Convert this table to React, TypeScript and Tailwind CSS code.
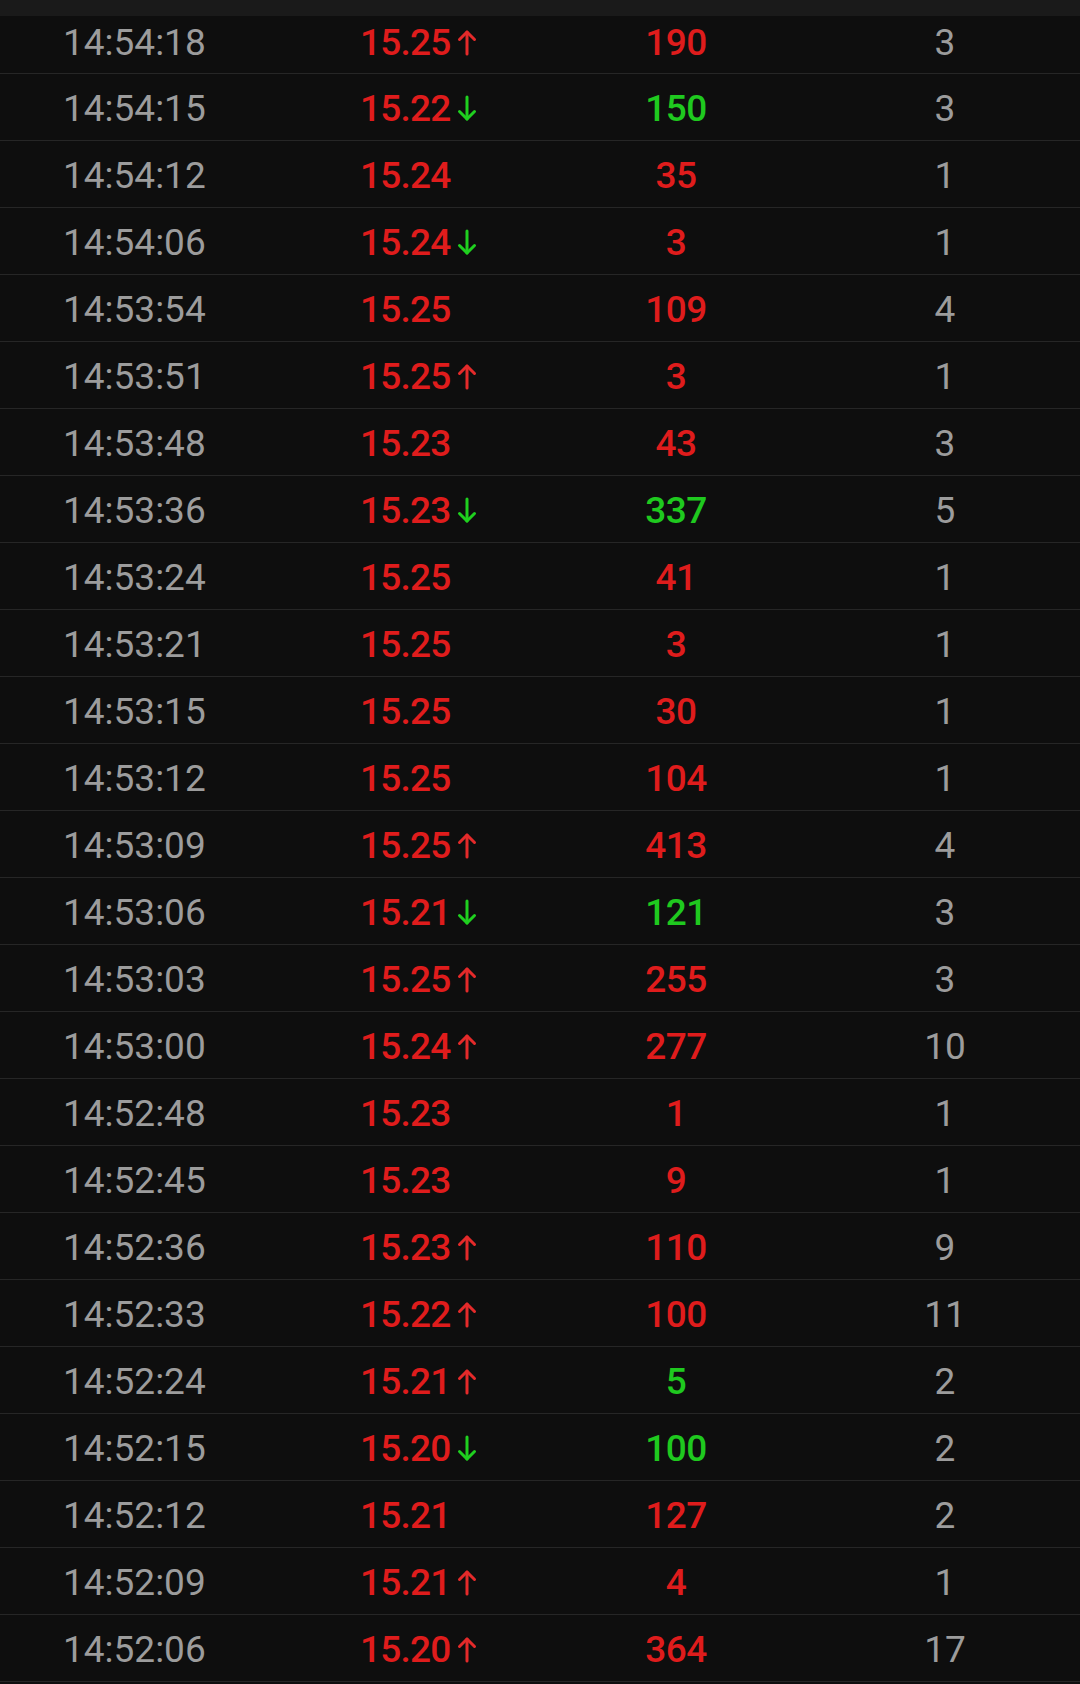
import { Fragment } from "react";

type Trade = {
  time: string;
  price: string;
  dir?: "up" | "down";
  vol: string;
  volUp: boolean;
  count: string;
};

const trades: Trade[] = [
  { time: "14:54:18", price: "15.25", dir: "up", vol: "190", volUp: true, count: "3" },
  { time: "14:54:15", price: "15.22", dir: "down", vol: "150", volUp: false, count: "3" },
  { time: "14:54:12", price: "15.24", vol: "35", volUp: true, count: "1" },
  { time: "14:54:06", price: "15.24", dir: "down", vol: "3", volUp: true, count: "1" },
  { time: "14:53:54", price: "15.25", vol: "109", volUp: true, count: "4" },
  { time: "14:53:51", price: "15.25", dir: "up", vol: "3", volUp: true, count: "1" },
  { time: "14:53:48", price: "15.23", vol: "43", volUp: true, count: "3" },
  { time: "14:53:36", price: "15.23", dir: "down", vol: "337", volUp: false, count: "5" },
  { time: "14:53:24", price: "15.25", vol: "41", volUp: true, count: "1" },
  { time: "14:53:21", price: "15.25", vol: "3", volUp: true, count: "1" },
  { time: "14:53:15", price: "15.25", vol: "30", volUp: true, count: "1" },
  { time: "14:53:12", price: "15.25", vol: "104", volUp: true, count: "1" },
  { time: "14:53:09", price: "15.25", dir: "up", vol: "413", volUp: true, count: "4" },
  { time: "14:53:06", price: "15.21", dir: "down", vol: "121", volUp: false, count: "3" },
  { time: "14:53:03", price: "15.25", dir: "up", vol: "255", volUp: true, count: "3" },
  { time: "14:53:00", price: "15.24", dir: "up", vol: "277", volUp: true, count: "10" },
  { time: "14:52:48", price: "15.23", vol: "1", volUp: true, count: "1" },
  { time: "14:52:45", price: "15.23", vol: "9", volUp: true, count: "1" },
  { time: "14:52:36", price: "15.23", dir: "up", vol: "110", volUp: true, count: "9" },
  { time: "14:52:33", price: "15.22", dir: "up", vol: "100", volUp: true, count: "11" },
  { time: "14:52:24", price: "15.21", dir: "up", vol: "5", volUp: false, count: "2" },
  { time: "14:52:15", price: "15.20", dir: "down", vol: "100", volUp: false, count: "2" },
  { time: "14:52:12", price: "15.21", vol: "127", volUp: true, count: "2" },
  { time: "14:52:09", price: "15.21", dir: "up", vol: "4", volUp: true, count: "1" },
  { time: "14:52:06", price: "15.20", dir: "up", vol: "364", volUp: true, count: "17" },
];

// thin tick arrow after the price
function Arrow({ dir }: { dir: "up" | "down" }) {
  const up = dir === "up";
  return (
    <svg
      width="20"
      height="27"
      viewBox="0 0 20 27"
      fill="none"
      stroke={up ? "#e42a2a" : "#1fd01f"}
      strokeWidth="3"
      strokeLinecap="round"
      strokeLinejoin="round"
      className="ml-[7px]"
      aria-hidden
    >
      {up ? (
        <>
          <path d="M10 3V25" />
          <path d="M2.5 10.5L10 3L17.5 10.5" />
        </>
      ) : (
        <>
          <path d="M10 2V24" />
          <path d="M2.5 16.5L10 24L17.5 16.5" />
        </>
      )}
    </svg>
  );
}

export default function App() {
  return (
    <div className="w-[1080px] h-[1684px] overflow-hidden bg-[#0e0e0e] font-['Roboto',sans-serif] text-[37px] leading-none">
      <div className="h-[16px] bg-[#1a1a1a]" />
      <div className="grid grid-cols-[360px_190px_252px_1fr]">
        {trades.map((t, i) => {
          const rowCls =
            i === 0
              ? "h-[58px] pb-[4px] border-b border-[#262626]"
              : "h-[67px] pt-[2px] border-b border-[#262626]";
          return (
            <Fragment key={t.time}>
              <div className={`${rowCls} flex items-center pl-[63px] text-[#9c9c9c]`}>
                {t.time}
              </div>
              <div className={`${rowCls} flex items-center font-medium tracking-[-0.8px] text-[#df1c1c]`}>
                {t.price}
                {t.dir && <Arrow dir={t.dir} />}
              </div>
              <div
                className={`${rowCls} flex items-center justify-center font-medium tracking-[-0.5px] ${
                  t.volUp ? "text-[#df1c1c]" : "text-[#1fc91f]"
                }`}
              >
                {t.vol}
              </div>
              <div className={`${rowCls} flex items-center justify-center pl-[8px] text-[#9c9c9c]`}>
                {t.count}
              </div>
            </Fragment>
          );
        })}
      </div>
    </div>
  );
}
